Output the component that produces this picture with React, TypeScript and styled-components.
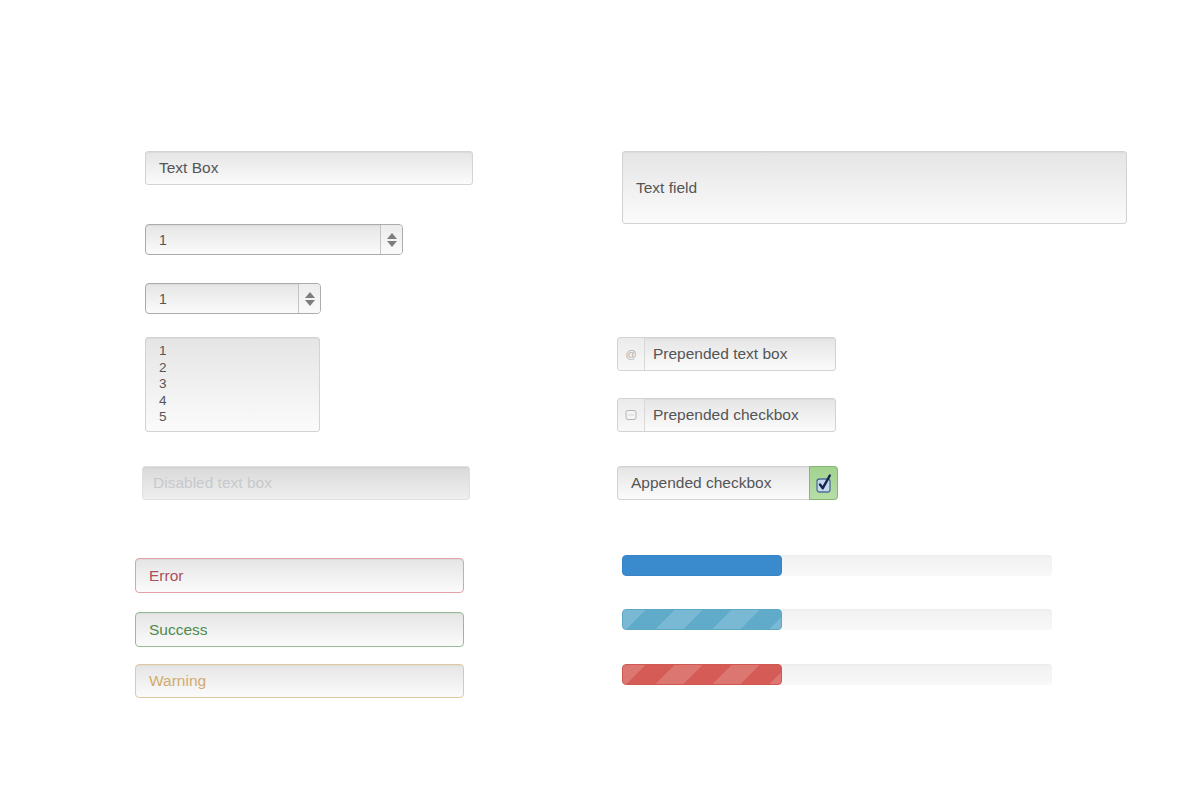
import styled, { createGlobalStyle, css } from "styled-components";

const GlobalStyle = createGlobalStyle`
  html, body {
    margin: 0;
    background: #ffffff;
  }
  body {
    font-family: "Liberation Sans", Arial, Helvetica, sans-serif;
    color: #555555;
  }
`;

const Page = styled.div`
  display: grid;
  grid-template-columns: 340px 520px;
  column-gap: 142px;
  padding: 151px 0 0 135px;
  width: 1200px;
  height: 800px;
  box-sizing: border-box;
`;

const Column = styled.div`
  display: flex;
  flex-direction: column;
  align-items: flex-start;
`;

// shared look of every field: soft grey top fading to white
const face = css`
  box-sizing: border-box;
  background: linear-gradient(#e5e5e5, #fbfbfb);
  border: 1px solid #d3d3d3;
  border-radius: 3px;
  box-shadow: inset 0 1px 1px rgba(0, 0, 0, 0.04);
`;

type Place = { $w: number; $h: number; $mt?: number; $ml?: number };

const place = css<Place>`
  width: ${(p) => p.$w}px;
  height: ${(p) => p.$h}px;
  margin-top: ${(p) => p.$mt ?? 0}px;
  margin-left: ${(p) => p.$ml ?? 0}px;
`;

const TextBox = styled.div<Place>`
  ${face}
  ${place}
  display: flex;
  align-items: center;
  padding-left: 13px;
  font-size: 15.5px;
  color: #555;
`;

const tones = {
  error: { border: "#e3a0a5", text: "#a9505b" },
  success: { border: "#97bb97", text: "#4e8a50" },
  warning: { border: "#e1c8a2", text: "#d1ab6d" },
};

const StatusBox = styled(TextBox)<{ $tone: keyof typeof tones }>`
  border-color: ${(p) => tones[p.$tone].border};
  color: ${(p) => tones[p.$tone].text};
  border-radius: 4px;
`;

const DisabledBox = styled(TextBox)`
  background: linear-gradient(#d9d9d9, #efefef);
  border-color: #e0e0e0;
  color: #c7c9cc;
  padding-left: 10px;
`;

const Spinner = styled.div<Place>`
  ${face}
  ${place}
  display: flex;
  border-color: #ababab;
  border-radius: 4px;
  font-size: 14px;
  color: #555;
`;

const SpinValue = styled.div`
  flex: 1;
  display: flex;
  align-items: center;
  padding-left: 13px;
`;

const SpinArrows = styled.div`
  width: 21px;
  border-left: 1px solid #c4c4c4;
  display: flex;
  flex-direction: column;
  align-items: center;
  justify-content: center;
  gap: 2px;
  background: linear-gradient(#ececec, #fafafa);
  border-radius: 0 3px 3px 0;
`;

const Arrow = styled.span<{ $down?: boolean }>`
  width: 0;
  height: 0;
  border-left: 5px solid transparent;
  border-right: 5px solid transparent;
  ${(p) =>
    p.$down
      ? "border-top: 6px solid #7d7d7d;"
      : "border-bottom: 6px solid #7d7d7d;"}
`;

const ListBox = styled.div<Place>`
  ${face}
  ${place}
  padding: 5px 0 0 13px;
  font-size: 13.5px;
  line-height: 16.5px;
  color: #555;
`;

const TallField = styled(TextBox)`
  padding-left: 13px;
  border-radius: 3px;
`;

const AddonGroup = styled.div<Place>`
  ${face}
  ${place}
  display: flex;
  align-items: stretch;
  font-size: 15.5px;
  color: #555;
`;

const Addon = styled.div<{ $checked?: boolean }>`
  width: 26px;
  display: flex;
  align-items: center;
  justify-content: center;
  border-right: 1px solid #d8d8d8;
  background: linear-gradient(#ebebeb, #f8f8f8);
  border-radius: 3px 0 0 3px;
  color: #b0b0b0;
  font-size: 11px;
  ${(p) =>
    p.$checked &&
    css`
      width: 27px;
      border: 1px solid #84b66f;
      margin: -1px -1px -1px 0;
      border-radius: 0 4px 4px 0;
      background: linear-gradient(#a2d290, #b6dea5);
    `}
`;

const AddonText = styled.div<{ $pad: number }>`
  flex: 1;
  display: flex;
  align-items: center;
  padding-left: ${(p) => p.$pad}px;
`;

const Track = styled.div<{ $mt: number }>`
  width: 430px;
  height: 21px;
  margin-top: ${(p) => p.$mt}px;
  margin-left: 5px;
  border-radius: 4px;
  background: linear-gradient(#f1f1f1, #f8f8f8);
  box-shadow: inset 0 1px 2px rgba(0, 0, 0, 0.03);
  overflow: hidden;
`;

const bars = {
  primary: { base: "#3a8bcd", edge: "#3785c6" },
  info: { base: "#60abca", edge: "#5ea8c6" },
  danger: { base: "#d55c56", edge: "#d25852" },
};

const Bar = styled.div<{ $kind: keyof typeof bars; $striped?: boolean }>`
  height: 100%;
  border-radius: 4px;
  box-sizing: border-box;
  border: 1px solid ${(p) => bars[p.$kind].edge};
  background-color: ${(p) => bars[p.$kind].base};
  ${(p) =>
    p.$striped &&
    css`
      background-image: linear-gradient(
        135deg,
        rgba(255, 255, 255, 0.16) 25%,
        transparent 25%,
        transparent 50%,
        rgba(255, 255, 255, 0.16) 50%,
        rgba(255, 255, 255, 0.16) 75%,
        transparent 75%,
        transparent
      );
      background-size: 57px 57px;
      background-position: -6px 0;
    `}
`;

const EmptyBox = () => (
  <svg width="12" height="12" viewBox="0 0 12 12">
    <rect x="1" y="1.5" width="10" height="9" rx="2" fill="#f4f4f4" stroke="#b4b4b4" />
    <line x1="3" y1="6" x2="9" y2="6" stroke="#d4d4d4" />
  </svg>
);

const CheckedBox = () => (
  <svg width="18" height="21" viewBox="0 0 18 21">
    <rect x="2" y="6" width="13" height="13" rx="2.5" fill="#c5d8ee" stroke="#4d6f99" strokeWidth="1.3" />
    <path d="M5 11.5 L7.8 15.2 L14.8 2.5" fill="none" stroke="#13244d" strokeWidth="2.4" strokeLinecap="round" strokeLinejoin="round" />
  </svg>
);

const App = () => {
  return (
    <>
      <GlobalStyle />
      <Page>
        <Column>
          <TextBox $w={328} $h={34} $ml={10}>
            Text Box
          </TextBox>
          <Spinner $w={258} $h={31} $mt={39} $ml={10}>
            <SpinValue>1</SpinValue>
            <SpinArrows>
              <Arrow />
              <Arrow $down />
            </SpinArrows>
          </Spinner>
          <Spinner $w={176} $h={31} $mt={28} $ml={10}>
            <SpinValue>1</SpinValue>
            <SpinArrows>
              <Arrow />
              <Arrow $down />
            </SpinArrows>
          </Spinner>
          <ListBox $w={175} $h={95} $mt={23} $ml={10}>
            {[1, 2, 3, 4, 5].map((n) => (
              <div key={n}>{n}</div>
            ))}
          </ListBox>
          <DisabledBox $w={328} $h={34} $mt={34} $ml={7}>
            Disabled text box
          </DisabledBox>
          <StatusBox $tone="error" $w={329} $h={35} $mt={58}>
            Error
          </StatusBox>
          <StatusBox $tone="success" $w={329} $h={35} $mt={19}>
            Success
          </StatusBox>
          <StatusBox $tone="warning" $w={329} $h={34} $mt={17}>
            Warning
          </StatusBox>
        </Column>

        <Column>
          <TallField $w={505} $h={73} $ml={5}>
            Text field
          </TallField>
          <AddonGroup $w={219} $h={34} $mt={113}>
            <Addon>@</Addon>
            <AddonText $pad={8}>Prepended text box</AddonText>
          </AddonGroup>
          <AddonGroup $w={219} $h={34} $mt={27}>
            <Addon>
              <EmptyBox />
            </Addon>
            <AddonText $pad={8}>Prepended checkbox</AddonText>
          </AddonGroup>
          <AddonGroup $w={221} $h={34} $mt={34}>
            <AddonText $pad={13}>Appended checkbox</AddonText>
            <Addon $checked>
              <CheckedBox />
            </Addon>
          </AddonGroup>
          <Track $mt={55}>
            <Bar $kind="primary" style={{ width: 160 }} />
          </Track>
          <Track $mt={33}>
            <Bar $kind="info" $striped style={{ width: 160 }} />
          </Track>
          <Track $mt={34}>
            <Bar $kind="danger" $striped style={{ width: 160 }} />
          </Track>
        </Column>
      </Page>
    </>
  );
};

export default App;
